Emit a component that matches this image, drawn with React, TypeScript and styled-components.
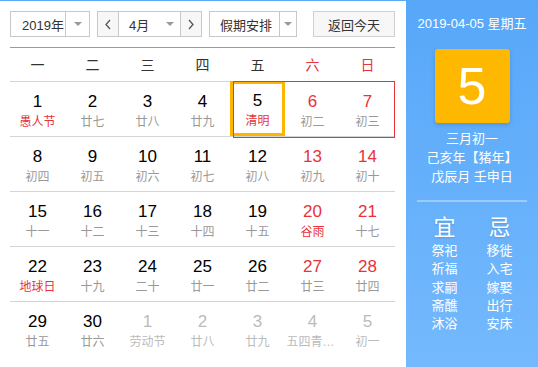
import React from 'react'
import styled, { createGlobalStyle } from 'styled-components'

const GlobalStyle = createGlobalStyle`
  body {
    margin: 0;
    font-family: 'Liberation Sans', 'Noto Sans CJK SC', sans-serif;
    background: #fff;
  }
`

const RED = '#e8323c'
const BLUE = '#5aa9f9'

const Wrapper = styled.div`
  display: flex;
  width: 538px;
  height: 367px;
  border-top: 1px solid ${BLUE};
  box-sizing: border-box;
`

const Main = styled.div`
  width: 406px;
  padding: 10px 0 0 10px;
  box-sizing: border-box;
`

const Toolbar = styled.div`
  display: flex;
  align-items: center;
  height: 26px;
  width: 385px;
`

const SelectBox = styled.div<{ width: number; arrowWidth: number; gap: number }>`
  display: grid;
  grid-template-columns: 1fr ${({ arrowWidth }) => arrowWidth}px;
  width: ${({ width }) => width}px;
  height: 26px;
  margin-right: ${({ gap }) => gap}px;
  border: 1px solid #c8c8c8;
  box-sizing: border-box;
  font-size: 13px;
  color: #333;
  background: #fff;
`

const SelectText = styled.div<{ pad: number }>`
  display: flex;
  align-items: center;
  padding-left: ${({ pad }) => pad}px;
`

const ArrowCell = styled.div<{ divider?: boolean }>`
  display: flex;
  align-items: center;
  justify-content: center;
  border-left: ${({ divider }) => (divider ? '1px solid #c8c8c8' : 'none')};
`

const Caret = styled.span`
  width: 0;
  height: 0;
  border-left: 4px solid transparent;
  border-right: 4px solid transparent;
  border-top: 4px solid #999;
`

const MonthBox = styled.div`
  display: grid;
  grid-template-columns: 21px 1fr 21px;
  width: 105px;
  height: 26px;
  margin-right: 7px;
  border: 1px solid #c8c8c8;
  box-sizing: border-box;
  font-size: 13px;
  color: #333;
`

const NavButton = styled.div<{ side: 'left' | 'right' }>`
  display: flex;
  align-items: center;
  justify-content: center;
  background: #f7f7f7;
  ${({ side }) => (side === 'left' ? 'border-right' : 'border-left')}: 1px solid #c8c8c8;
`

const MonthMiddle = styled.div`
  display: grid;
  grid-template-columns: 1fr 20px;
  align-items: center;
  padding-left: 10px;
`

const TodayButton = styled.div`
  display: flex;
  align-items: center;
  justify-content: center;
  width: 82px;
  height: 26px;
  margin-left: auto;
  border: 1px solid #d0d0d0;
  box-sizing: border-box;
  background: #f7f7f7;
  font-size: 13px;
  color: #333;
`

const Divider = styled.div`
  width: 385px;
  height: 1px;
  margin-top: 10px;
  background: ${BLUE};
`

const WeekHeader = styled.div`
  display: grid;
  grid-template-columns: repeat(7, 55px);
  height: 33px;
  align-items: center;
`

const WeekDay = styled.div<{ weekend?: boolean }>`
  text-align: center;
  font-size: 14px;
  color: ${({ weekend }) => (weekend ? RED : '#333')};
  padding-bottom: 2px;
`

const Row = styled.div`
  display: grid;
  grid-template-columns: repeat(7, 55px);
  grid-template-rows: 54px;
  border-top: 1px solid #d4d4d4;
  width: 385px;
`

const Cell = styled.div<{ today?: boolean; col: number }>`
  grid-row: 1;
  grid-column: ${({ col }) => col};
  display: flex;
  flex-direction: column;
  align-items: center;
  padding-top: 10px;
  box-sizing: border-box;
  ${({ today }) => (today ? 'box-shadow: inset 0 0 0 3px #ffb400; margin-top: -1px;' : '')}
`

const HolidayRange = styled.div<{ from: number; span: number }>`
  grid-row: 1;
  grid-column: ${({ from }) => from} / span ${({ span }) => span};
  margin: -1px 0 -2px 3px;
  border: 1px solid ${RED};
  pointer-events: none;
`

const DayNum = styled.div<{ tone: 'normal' | 'red' | 'muted' }>`
  font-size: 17px;
  line-height: 20px;
  color: ${({ tone }) => (tone === 'red' ? RED : tone === 'muted' ? '#bbb' : '#000')};
`

const Lunar = styled.div<{ tone: 'normal' | 'red' | 'muted' }>`
  max-width: 52px;
  margin-top: 1px;
  font-size: 12px;
  line-height: 18px;
  white-space: nowrap;
  overflow: hidden;
  text-overflow: ellipsis;
  color: ${({ tone }) => (tone === 'red' ? RED : tone === 'muted' ? '#bbb' : '#999')};
`

const Side = styled.div`
  flex: 1;
  display: flex;
  flex-direction: column;
  align-items: center;
  padding-top: 14px;
  background: linear-gradient(#57a7f9, #74b9fd);
  color: #fff;
`

const SideDate = styled.div`
  font-size: 13px;
  line-height: 18px;
`

const BigDay = styled.div`
  display: flex;
  align-items: center;
  justify-content: center;
  width: 75px;
  height: 74px;
  margin-top: 16px;
  border-radius: 3px;
  background: #ffb800;
  box-shadow: 0 2px 4px rgba(0, 0, 0, 0.15);
  font-size: 52px;
  color: #fff;
`

const LunarInfo = styled.div`
  margin-top: 6px;
  text-align: center;
  font-size: 13px;
  line-height: 19px;
`

const SideRule = styled.div`
  width: 110px;
  height: 2px;
  margin-top: 14px;
  background: rgba(255, 255, 255, 0.35);
`

const Advice = styled.div`
  display: grid;
  grid-template-columns: 55px 55px;
  margin-top: 12px;
  text-align: center;
`

const AdviceTitle = styled.div`
  font-size: 22px;
  line-height: 28px;
  text-shadow: 0 1px 2px rgba(0, 0, 0, 0.15);
`

const AdviceItem = styled.div`
  font-size: 13px;
  line-height: 18.3px;
`

type Day = { n: number; lunar: string; red?: boolean; lunarRed?: boolean; muted?: boolean; today?: boolean }

const weeks: Day[][] = [
  [
    { n: 1, lunar: '愚人节', lunarRed: true },
    { n: 2, lunar: '廿七' },
    { n: 3, lunar: '廿八' },
    { n: 4, lunar: '廿九' },
    { n: 5, lunar: '清明', lunarRed: true, today: true },
    { n: 6, lunar: '初二', red: true },
    { n: 7, lunar: '初三', red: true }
  ],
  [
    { n: 8, lunar: '初四' },
    { n: 9, lunar: '初五' },
    { n: 10, lunar: '初六' },
    { n: 11, lunar: '初七' },
    { n: 12, lunar: '初八' },
    { n: 13, lunar: '初九', red: true },
    { n: 14, lunar: '初十', red: true }
  ],
  [
    { n: 15, lunar: '十一' },
    { n: 16, lunar: '十二' },
    { n: 17, lunar: '十三' },
    { n: 18, lunar: '十四' },
    { n: 19, lunar: '十五' },
    { n: 20, lunar: '谷雨', red: true, lunarRed: true },
    { n: 21, lunar: '十七', red: true }
  ],
  [
    { n: 22, lunar: '地球日', lunarRed: true },
    { n: 23, lunar: '十九' },
    { n: 24, lunar: '二十' },
    { n: 25, lunar: '廿一' },
    { n: 26, lunar: '廿二' },
    { n: 27, lunar: '廿三', red: true },
    { n: 28, lunar: '廿四', red: true }
  ],
  [
    { n: 29, lunar: '廿五' },
    { n: 30, lunar: '廿六' },
    { n: 1, lunar: '劳动节', muted: true },
    { n: 2, lunar: '廿八', muted: true },
    { n: 3, lunar: '廿九', muted: true },
    { n: 4, lunar: '五四青年节', muted: true },
    { n: 5, lunar: '初一', muted: true }
  ]
]

const Chevron = ({ dir }: { dir: 'left' | 'right' }) => (
  <svg width="8" height="11" viewBox="0 0 8 11">
    <polyline
      points={dir === 'left' ? '6,1 2,5.5 6,10' : '2,1 6,5.5 2,10'}
      fill="none"
      stroke="#555"
      strokeWidth="1.3"
    />
  </svg>
)

const good = ['祭祀', '祈福', '求嗣', '斋醮', '沐浴']
const bad = ['移徙', '入宅', '嫁娶', '出行', '安床']

export default function App() {
  return (
    <Wrapper>
      <GlobalStyle />
      <Main>
        <Toolbar>
          <SelectBox width={80} arrowWidth={24} gap={7}>
            <SelectText pad={11}>2019年</SelectText>
            <ArrowCell divider>
              <Caret />
            </ArrowCell>
          </SelectBox>
          <MonthBox>
            <NavButton side="left">
              <Chevron dir="left" />
            </NavButton>
            <MonthMiddle>
              <span>4月</span>
              <ArrowCell>
                <Caret />
              </ArrowCell>
            </MonthMiddle>
            <NavButton side="right">
              <Chevron dir="right" />
            </NavButton>
          </MonthBox>
          <SelectBox width={88} arrowWidth={17} gap={0}>
            <SelectText pad={10}>假期安排</SelectText>
            <ArrowCell divider>
              <Caret />
            </ArrowCell>
          </SelectBox>
          <TodayButton>返回今天</TodayButton>
        </Toolbar>
        <Divider />
        <WeekHeader>
          {['一', '二', '三', '四', '五', '六', '日'].map((d, i) => (
            <WeekDay key={d} weekend={i > 4}>
              {d}
            </WeekDay>
          ))}
        </WeekHeader>
        {weeks.map((week, wi) => (
          <Row key={wi}>
            {week.map((d, i) => {
              const numTone = d.muted ? 'muted' : d.red ? 'red' : 'normal'
              const lunarTone = d.muted ? 'muted' : d.lunarRed ? 'red' : 'normal'
              return (
                <Cell key={i} col={i + 1} today={d.today}>
                  <DayNum tone={numTone}>{d.n}</DayNum>
                  <Lunar tone={lunarTone}>{d.lunar}</Lunar>
                </Cell>
              )
            })}
            {wi === 0 && <HolidayRange from={5} span={3} />}
          </Row>
        ))}
      </Main>
      <Side>
        <SideDate>2019-04-05 星期五</SideDate>
        <BigDay>5</BigDay>
        <LunarInfo>
          <div>三月初一</div>
          <div>己亥年【猪年】</div>
          <div>戊辰月 壬申日</div>
        </LunarInfo>
        <SideRule />
        <Advice>
          <div>
            <AdviceTitle>宜</AdviceTitle>
            {good.map(g => (
              <AdviceItem key={g}>{g}</AdviceItem>
            ))}
          </div>
          <div>
            <AdviceTitle>忌</AdviceTitle>
            {bad.map(b => (
              <AdviceItem key={b}>{b}</AdviceItem>
            ))}
          </div>
        </Advice>
      </Side>
    </Wrapper>
  )
}
